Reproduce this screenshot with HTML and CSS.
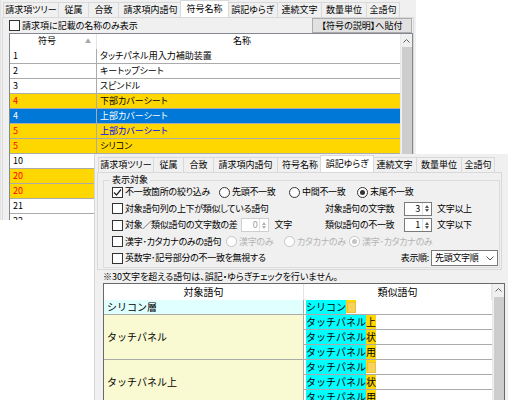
FILE: index.html
```html
<!DOCTYPE html>
<html lang="ja">
<head>
  <meta charset="UTF-8">
  <title>符号名称 / 誤記ゆらぎ</title>
  <link rel="stylesheet" href="styles.css">
</head>
<body>

  <!-- back window: 符号名称 tab -->
  <div class="win back">
    <div class="tabs">
      <span class="tab">請求項ツリー</span>
      <span class="tab">従属</span>
      <span class="tab">合致</span>
      <span class="tab">請求項内語句</span>
      <span class="tab on">符号名称</span>
      <span class="tab">誤記ゆらぎ</span>
      <span class="tab">連続文字</span>
      <span class="tab">数量単位</span>
      <span class="tab">全語句</span>
    </div>
    <div class="page">
      <div class="bar">
        <label class="chk"><span class="box"></span>請求項に記載の名称のみ表示</label>
        <button class="btn">【符号の説明】へ貼付</button>
      </div>
      <div class="list">
        <div class="tbl">
          <div class="lrow head"><span class="c1">符号<i class="sort">▲</i></span><span class="c2">名称</span></div>
          <div class="lrow"><span class="c1">1</span><span class="c2">タッチパネル用入力補助装置</span></div>
          <div class="lrow"><span class="c1">2</span><span class="c2">キートップシート</span></div>
          <div class="lrow"><span class="c1">3</span><span class="c2">スピンドル</span></div>
          <div class="lrow hl"><span class="c1">4</span><span class="c2">下部カバーシート</span></div>
          <div class="lrow sel"><span class="c1">4</span><span class="c2">上部カバーシート</span></div>
          <div class="lrow hl"><span class="c1">5</span><span class="c2 blue">上部カバーシート</span></div>
          <div class="lrow hl"><span class="c1">5</span><span class="c2">シリコン</span></div>
          <div class="lrow"><span class="c1">10</span><span class="c2"></span></div>
          <div class="lrow hl"><span class="c1">20</span><span class="c2"></span></div>
          <div class="lrow hl"><span class="c1">20</span><span class="c2"></span></div>
          <div class="lrow"><span class="c1">21</span><span class="c2"></span></div>
          <div class="lrow"><span class="c1">22</span><span class="c2"></span></div>
        </div>
        <div class="vbar">
          <span class="arrow"><svg width="7" height="4" viewBox="0 0 7 4"><polyline points="0.5,3.5 3.5,0.5 6.5,3.5" fill="none" stroke="#606060"/></svg></span>
          <span class="thumb"></span>
        </div>
      </div>
    </div>
  </div>

  <!-- front window: 誤記ゆらぎ tab -->
  <div class="win front">
    <div class="tabs">
      <span class="tab">請求項ツリー</span>
      <span class="tab">従属</span>
      <span class="tab">合致</span>
      <span class="tab">請求項内語句</span>
      <span class="tab">符号名称</span>
      <span class="tab on">誤記ゆらぎ</span>
      <span class="tab">連続文字</span>
      <span class="tab">数量単位</span>
      <span class="tab">全語句</span>
    </div>
    <div class="page">
      <fieldset class="grp">
        <legend>表示対象</legend>
        <div class="opt">
          <label class="chk on w-a"><span class="box"><svg width="9" height="9" viewBox="0 0 9 9"><polyline points="1,4.5 3.5,7 8,1.5" fill="none" stroke="#222" stroke-width="1.2"/></svg></span>不一致箇所の絞り込み</label>
          <label class="rad r1"><span class="dot"></span>先頭不一致</label>
          <label class="rad r2"><span class="dot"></span>中間不一致</label>
          <label class="rad on"><span class="dot"></span>末尾不一致</label>
        </div>
        <div class="opt">
          <label class="chk"><span class="box"></span>対象語句列の上下が類似している語句</label>
          <div class="pair">
            <span class="plabel">対象語句の文字数</span>
            <span class="spin"><span class="v">3</span><span class="arr"><i class="up"></i><i class="dn"></i></span></span>
            <span class="unit">文字以上</span>
          </div>
        </div>
        <div class="opt">
          <label class="chk"><span class="box"></span>対象／類似語句の文字数の差</label>
          <span class="spin off"><span class="v">0</span><span class="arr"><i class="up"></i><i class="dn"></i></span></span>
          <span class="unit">文字</span>
          <div class="pair">
            <span class="plabel">類似語句の不一致</span>
            <span class="spin"><span class="v">1</span><span class="arr"><i class="up"></i><i class="dn"></i></span></span>
            <span class="unit">文字以下</span>
          </div>
        </div>
        <div class="opt">
          <label class="chk w-b"><span class="box"></span>漢字･カタカナのみの語句</label>
          <label class="rad off k1"><span class="dot"></span>漢字のみ</label>
          <label class="rad off k2"><span class="dot"></span>カタカナのみ</label>
          <label class="rad off on"><span class="dot"></span>漢字･カタカナのみ</label>
        </div>
        <div class="opt">
          <label class="chk"><span class="box"></span>英数字･記号部分の不一致を無視する</label>
          <span class="order">表示順:</span>
          <span class="combo">先頭文字順<svg width="8" height="5" viewBox="0 0 8 5"><polyline points="0.5,0.5 4,4 7.5,0.5" fill="none" stroke="#505050"/></svg></span>
        </div>
      </fieldset>
    </div>
    <p class="note">※30文字を超える語句は、誤記・ゆらぎチェックを行いません。</p>
    <div class="grid">
      <div class="gtbl">
        <div class="gh">対象語句</div>
        <div class="gh">類似語句</div>

        <div class="gl cyan">シリコン層</div>
        <div class="gr"><span class="m">シリコン</span><span class="miss"></span></div>

        <div class="gl tall">タッチパネル</div>
        <div class="gr"><span class="m">タッチパネル</span><span class="d">上</span></div>
        <div class="gr"><span class="m">タッチパネル</span><span class="d">状</span></div>
        <div class="gr"><span class="m">タッチパネル</span><span class="d">用</span></div>

        <div class="gl tall">タッチパネル上</div>
        <div class="gr"><span class="m">タッチパネル</span><span class="miss"></span></div>
        <div class="gr"><span class="m">タッチパネル</span><span class="d">状</span></div>
        <div class="gr"><span class="m">タッチパネル</span><span class="d">用</span></div>
      </div>
      <div class="vbar">
        <span class="arrow"><svg width="7" height="4" viewBox="0 0 7 4"><polyline points="0.5,3.5 3.5,0.5 6.5,3.5" fill="none" stroke="#606060"/></svg></span>
        <span class="thumb"></span>
      </div>
    </div>
  </div>

</body>
</html>
```

FILE: styles.css
```css
* {
  box-sizing: border-box;
}

body {
  margin: 0;
  width: 530px;
  height: 400px;
  overflow: hidden;
  position: relative;
  background: #fff;
  font-family: "Noto Sans CJK JP", "Noto Sans", sans-serif;
  font-size: 9px;
  font-feature-settings: "palt";
  color: #000;
  line-height: 14px;
}

.win {
  position: absolute;
  background: #f0f0f0;
  overflow: hidden;
}

.back {
  left: 0;
  top: 0;
  width: 416px;
  height: 220px;
  padding: 0 2px 0 1px;
  border-left: 1px solid #e3e3e3;
}

.front {
  left: 94px;
  top: 154px;
  width: 414px;
  height: 246px;
  padding: 1px 6px 0 2px;
  border-left: 1px solid #d6d6d6;
}

/* tabs */
.tabs {
  display: flex;
  align-items: flex-end;
  height: 17px;
  padding-left: 1px;
}

.tab {
  height: 15px;
  line-height: 14px;
  text-align: center;
  border: 1px solid #d9d9d9;
  border-bottom: none;
  border-right: none;
  background: #f0f0f0;
  white-space: nowrap;
}

.tab:nth-child(1) { width: 55px; }
.tab:nth-child(2) { width: 30px; }
.tab:nth-child(3) { width: 30px; }
.tab:nth-child(4) { width: 64px; }
.tab:nth-child(5) { width: 45px; }
.tab:nth-child(6) { width: 50px; }
.tab:nth-child(7) { width: 44px; }
.tab:nth-child(8) { width: 45px; }
.tab:nth-child(9) { width: 34px; border-right: 1px solid #d9d9d9; }

.tab.on {
  height: 17px;
  line-height: 16px;
  background: #fff;
  position: relative;
  z-index: 1;
  margin: 0 -2px;
  border-right: 1px solid #d9d9d9;
}

.tab:nth-child(5).on { width: 49px; }
.tab:nth-child(6).on { width: 54px; }

.page {
  border: 1px solid #d9d9d9;
  background: #f0f0f0;
}

/* back window */
.back .page {
  height: 203px;
  border-bottom: none;
  padding: 0 0 0 6px;
}

.bar {
  display: flex;
  align-items: center;
  justify-content: space-between;
  height: 15px;
  margin-right: 1px;
}

.chk {
  display: flex;
  align-items: center;
  white-space: nowrap;
}

.box {
  width: 11px;
  height: 11px;
  border: 1px solid #333;
  background: #fff;
  margin-right: 2px;
  display: flex;
  align-items: center;
  justify-content: center;
  flex: none;
}

.btn {
  font: inherit;
  font-feature-settings: "palt";
  height: 15px;
  line-height: 12px;
  width: 100px;
  padding: 0;
  border: 1px solid #adadad;
  background: #e1e1e1;
  color: #000;
}

.list {
  display: flex;
  width: 404px;
  height: 190px;
  border: 1px solid #828790;
  background: #fff;
  overflow: hidden;
}

.tbl {
  flex: 1;
}

.lrow {
  display: flex;
  height: 15px;
  border-bottom: 1px solid #ababab;
}

.lrow .c1 {
  width: 87px;
  padding-left: 3px;
  border-right: 1px solid #ababab;
  color: #000;
}

.lrow .c2 {
  flex: 1;
  padding-left: 3px;
}

.lrow.head {
  border-bottom: none;
}

.lrow.head .c1 {
  position: relative;
  text-align: center;
  padding: 0 12px 0 0;
  border-right-color: #e5e5e5;
}

.lrow.head .c2 {
  text-align: center;
  padding-right: 16px;
}

.sort {
  position: absolute;
  right: 5px;
  top: 0;
  font-style: normal;
  font-size: 6px;
  color: #a8a8a8;
}

.lrow.hl {
  background: #ffd700;
}

.lrow.hl .c1 {
  color: #ff0000;
}

.lrow .c2.blue {
  color: #0000ff;
}

.lrow.sel {
  background: #0078d7;
  color: #fff;
}

.lrow.sel .c1 {
  color: #fff;
}

.vbar {
  width: 12px;
  background: #f0f0f0;
  display: flex;
  flex-direction: column;
  align-items: center;
  border-left: 1px solid #e8e8e8;
}

.vbar .arrow {
  height: 13px;
  display: flex;
  align-items: center;
}

.vbar .thumb {
  flex: 1;
  width: 10px;
  background: #cdcdcd;
}

/* front window */
.front .page {
  padding: 0 1px 1px 5px;
}

.grp {
  margin: 1px 0 0;
  padding: 0 0 0 8px;
  border: 1px solid #dcdcdc;
  letter-spacing: -0.3px;
}

.grp legend {
  padding: 0 2px;
  margin: 0 0 -2px -2px;
  line-height: 12px;
  letter-spacing: 0;
}

.opt {
  display: flex;
  align-items: center;
  height: 16.5px;
  white-space: nowrap;
}

/* fixed label widths keep the radio columns where the form puts them */
.w-a { width: 107px; }
.w-b { width: 114px; }
.r1 { width: 70px; }
.r2 { width: 68px; }
.k1 { width: 58px; }
.k2 { width: 65px; }

.rad {
  display: flex;
  align-items: center;
}

.dot {
  width: 11px;
  height: 11px;
  border: 1px solid #333;
  border-radius: 50%;
  background: #fff;
  margin-right: 2px;
  position: relative;
  flex: none;
}

.rad.on .dot::after {
  content: "";
  position: absolute;
  left: 2px;
  top: 2px;
  width: 5px;
  height: 5px;
  border-radius: 50%;
  background: #333;
}

.rad.off {
  color: #b4b4b4;
}

.rad.off .dot {
  border-color: #c4c4c4;
}

.rad.off.on .dot::after {
  background: #c4c4c4;
}

.pair {
  display: flex;
  align-items: center;
  margin-left: auto;
  width: 152px;
  margin-right: 22px;
}

.plabel {
  width: 79px;
}

.spin {
  display: flex;
  width: 28px;
  height: 14px;
  border: 1px solid #7a7a7a;
  background: #fff;
}

.spin .v {
  flex: 1;
  text-align: right;
  padding-right: 2px;
  line-height: 12px;
}

.spin .arr {
  width: 9px;
  display: flex;
  flex-direction: column;
  justify-content: center;
  align-items: center;
  gap: 1px;
  border-left: 1px solid #e0e0e0;
}

.spin .up,
.spin .dn {
  width: 0;
  height: 0;
  border-left: 2.5px solid transparent;
  border-right: 2.5px solid transparent;
}

.spin .up {
  border-bottom: 3px solid #555;
}

.spin .dn {
  border-top: 3px solid #555;
}

.spin.off {
  margin-left: 4px;
  border-color: #cfcfcf;
  color: #a0a0a0;
}

.spin.off .up { border-bottom-color: #b0b0b0; }
.spin.off .dn { border-top-color: #b0b0b0; }

.unit {
  margin-left: 5px;
}

.order {
  margin-left: auto;
  margin-right: 2px;
}

.combo {
  display: flex;
  align-items: center;
  justify-content: space-between;
  width: 67px;
  height: 16px;
  padding: 0 3px;
  border: 1px solid #7a7a7a;
  background: #fff;
  margin-right: 1px;
}

.note {
  margin: 0 0 0 6px;
  height: 13px;
  line-height: 13px;
}

.grid {
  display: flex;
  width: 402px;
  height: 130px;
  margin: 0 0 0 6px;
  border: 1px solid #696969;
  background: #fff;
  overflow: hidden;
}

.gtbl {
  flex: 1;
  display: grid;
  grid-template-columns: 200px 1fr;
  grid-auto-rows: 15px;
  grid-template-rows: 16px;
  align-content: start;
  font-size: 10px;
  font-feature-settings: normal;
  line-height: 14px;
}

.gh {
  text-align: center;
  line-height: 16px;
  border-right: 1px solid #e5e5e5;
}

.gl {
  background: #fafad2;
  border-right: 1px solid #ababab;
  border-bottom: 1px solid #ababab;
  padding-left: 3px;
  display: flex;
  align-items: center;
}

.gl.cyan {
  background: #e0ffff;
}

.gl.tall {
  grid-row: span 3;
}

.gr {
  border-bottom: 1px solid #ababab;
  padding-left: 2px;
  display: flex;
  align-items: center;
}

.gr .m {
  background: #00ffff;
}

.gr .d {
  background: #ffd700;
}

.miss {
  width: 10px;
  height: 13px;
  background: #ffd700;
  position: relative;
}

.miss::after {
  content: "";
  position: absolute;
  left: 1px;
  top: 2px;
  width: 7px;
  height: 9px;
  border: 1px solid #eac040;
  background: #f6d25a;
}

.grid .vbar {
  width: 12px;
}
```
